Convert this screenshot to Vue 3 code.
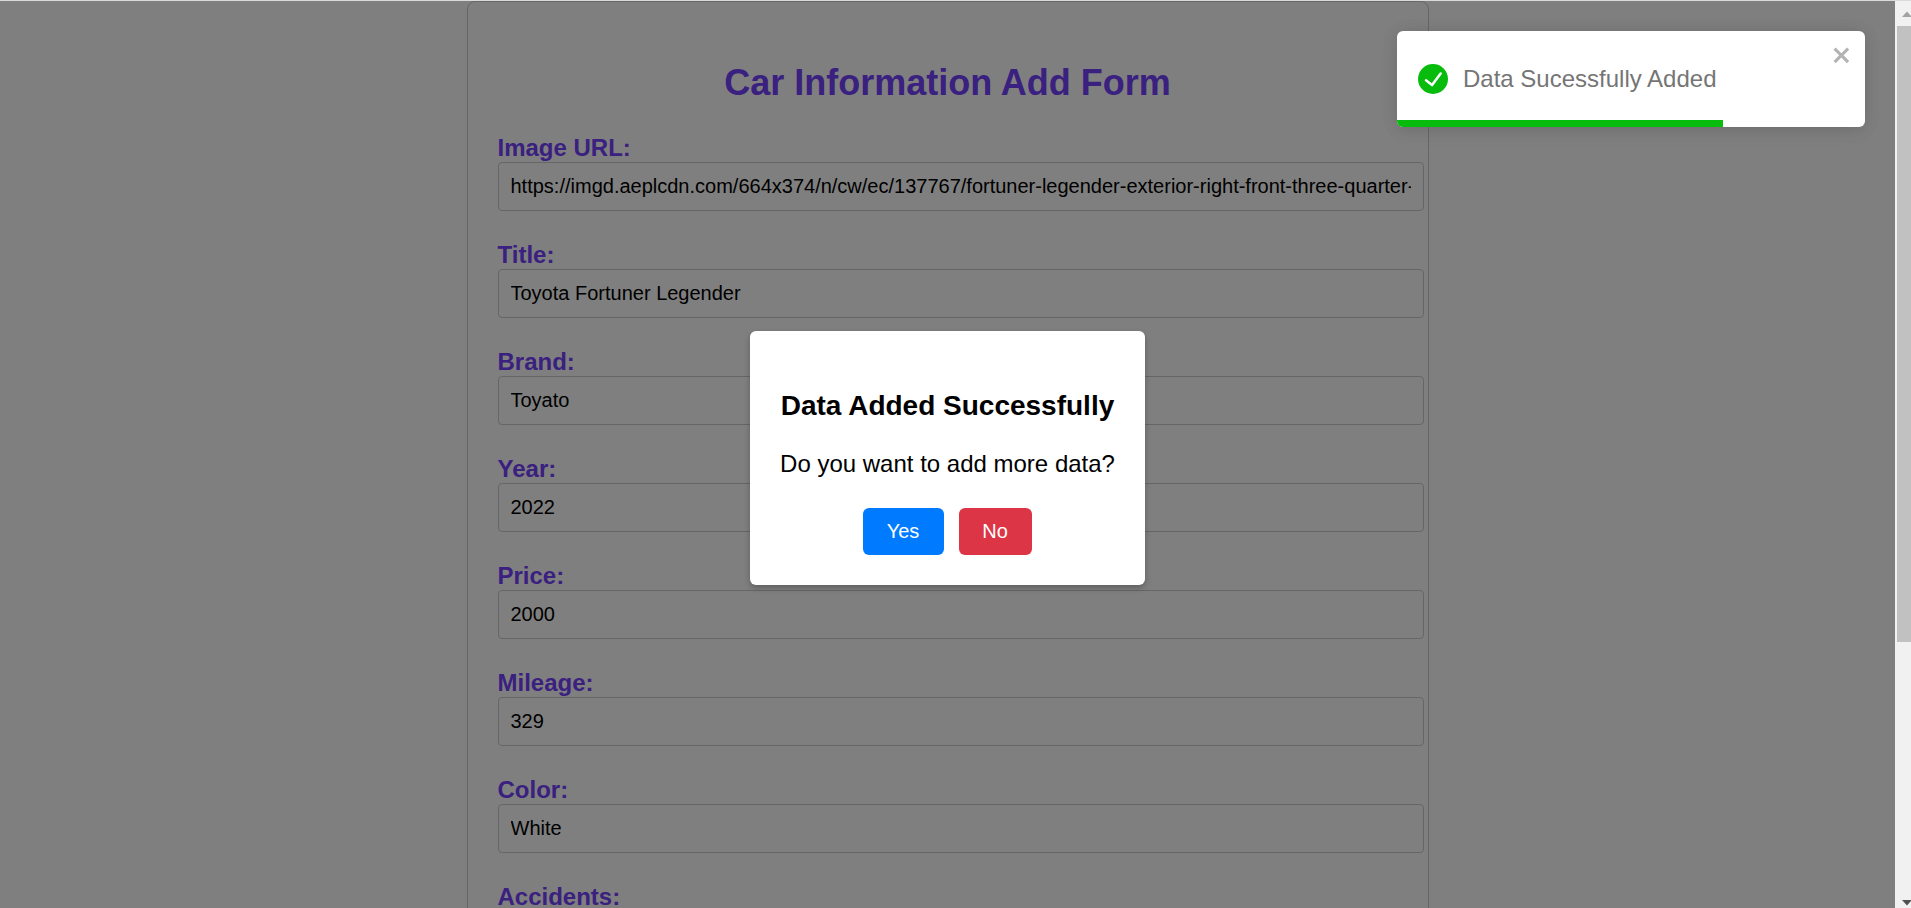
<script setup>
const fields = [
  { label: 'Image URL:', value: 'https://imgd.aeplcdn.com/664x374/n/cw/ec/137767/fortuner-legender-exterior-right-front-three-quarter-2.jpeg' },
  { label: 'Title:', value: 'Toyota Fortuner Legender' },
  { label: 'Brand:', value: 'Toyato' },
  { label: 'Year:', value: '2022' },
  { label: 'Price:', value: '2000' },
  { label: 'Mileage:', value: '329' },
  { label: 'Color:', value: 'White' },
  { label: 'Accidents:', value: '' },
]
</script>

<template>
  <div class="window">
    <div class="page">
      <form class="card" @submit.prevent>
        <h1>Car Information Add Form</h1>
        <div v-for="f in fields" :key="f.label" class="field">
          <label>{{ f.label }}</label>
          <div class="input"><span>{{ f.value }}</span></div>
        </div>
      </form>
    </div>
    <div class="scrollbar">
      <svg class="arrow" width="10" height="6" viewBox="0 0 10 6"><path d="M0 6 5 0.5 10 6Z" fill="#a3a3a3" /></svg>
      <div class="thumb"></div>
      <svg class="arrow down" width="10" height="6" viewBox="0 0 10 6"><path d="M0 0 5 5.5 10 0Z" fill="#505050" /></svg>
    </div>

    <div class="overlay">
      <div class="modal">
        <h2>Data Added Successfully</h2>
        <p>Do you want to add more data?</p>
        <div class="actions">
          <button class="yes">Yes</button>
          <button class="no">No</button>
        </div>
      </div>
    </div>

    <div class="toast">
      <svg class="check" width="30" height="30" viewBox="0 0 24 24">
        <path fill="#07bc0c" d="M12 0a12 12 0 1012 12A12.014 12.014 0 0012 0zm6.927 8.2l-6.845 9.289a1.011 1.011 0 01-1.43.188l-4.888-3.908a1 1 0 111.25-1.562l4.076 3.261 6.227-8.451a1 1 0 111.61 1.183z" />
      </svg>
      <span class="message">Data Sucessfully Added</span>
      <svg class="close" width="21" height="24" viewBox="0 0 14 16">
        <path fill="#b3b3b3" fill-rule="evenodd" d="M7.71 8.23l3.75 3.75-1.48 1.48-3.75-3.75-3.75 3.75L1 11.98l3.75-3.75L1 4.48 2.48 3l3.75 3.75L9.98 3l1.48 1.48-3.75 3.75z" />
      </svg>
      <div class="progress"></div>
    </div>
  </div>
</template>

<style>
body { margin: 0; overflow: hidden; }
</style>

<style scoped>
.window {
  box-sizing: border-box;
  position: relative;
  display: flex;
  width: 1911px;
  height: 908px;
  overflow: hidden;
  border-top: 1px solid #d7dbd9;
  background: #fff;
  font-family: "Liberation Sans", Arial, sans-serif;
  color: #000;
}
.page {
  width: 1895px;
  height: 907px;
  overflow: hidden;
}
.card {
  box-sizing: border-box;
  width: 962px;
  height: 1400px;
  margin-left: 467px;
  padding: 60px 30px 30px;
  border: 1px solid #ccc;
  border-radius: 8px;
}
h1 {
  margin: 0 1px 31px 0;
  font-size: 36px;
  line-height: 41px;
  text-align: center;
  color: #7540ff;
}
.field { margin-bottom: 30px; }
label {
  display: block;
  margin-left: -0.5px;
  font-size: 24px;
  font-weight: bold;
  line-height: 28px;
  color: #7540ff;
}
.input {
  width: 100%;
  height: 23px;
  padding: 12px;
  border: 1px solid #ccc;
  border-radius: 4px;
  font-size: 20px;
  line-height: 23px;
}
.input span {
  display: block;
  height: 23px;
  margin-left: -0.5px;
  overflow: hidden;
  white-space: nowrap;
}
.scrollbar {
  box-sizing: border-box;
  display: flex;
  flex-direction: column;
  width: 16px;
  height: 907px;
  padding: 10px 0 2px 2px;
  background: #f1f1f1;
}
.arrow { margin-left: 5px; flex: none; }
.thumb { height: 616px; margin-top: 9px; background: #c1c1c1; flex: none; }
.down { margin-top: auto; }
.overlay {
  position: absolute;
  top: 0;
  left: 0;
  display: flex;
  align-items: center;
  justify-content: center;
  width: 1895px;
  height: 907px;
  padding-top: 7px;
  box-sizing: border-box;
  background: rgba(0, 0, 0, 0.5);
}
.modal {
  box-sizing: border-box;
  width: 395px;
  height: 254px;
  padding: 59px 0 30px;
  border-radius: 6px;
  background: #fff;
  box-shadow: 0 3px 6px rgba(0, 0, 0, 0.25);
  text-align: center;
}
h2 { margin: 0; font-size: 28px; line-height: 32px; white-space: nowrap; }
p { margin: 28px 0 0; font-size: 24px; line-height: 28px; white-space: nowrap; }
.actions {
  display: flex;
  justify-content: center;
  gap: 15px;
  margin-top: 30px;
}
button {
  height: 47px;
  padding: 0 1px 0 0;
  border: 0;
  border-radius: 6px;
  font-family: inherit;
  font-size: 20px;
  color: #fff;
}
.yes { width: 81px; background: #007bff; }
.no { width: 73px; background: #dc3545; }
.toast {
  position: absolute;
  top: 30px;
  left: 1397px;
  box-sizing: border-box;
  display: flex;
  align-items: center;
  width: 468px;
  height: 96px;
  padding-left: 21px;
  border-radius: 6px;
  overflow: hidden;
  background: #fff;
  box-shadow: 0 1.5px 15px rgba(0, 0, 0, 0.1), 0 3px 22px rgba(0, 0, 0, 0.05);
}
.message {
  margin-left: 15px;
  font-size: 24px;
  line-height: 28px;
  color: #757575;
  white-space: nowrap;
}
.close { position: absolute; top: 12px; right: 12px; }
.progress {
  position: absolute;
  left: 0;
  bottom: 0;
  width: 326px;
  height: 7px;
  background: #07bc0c;
}
</style>
